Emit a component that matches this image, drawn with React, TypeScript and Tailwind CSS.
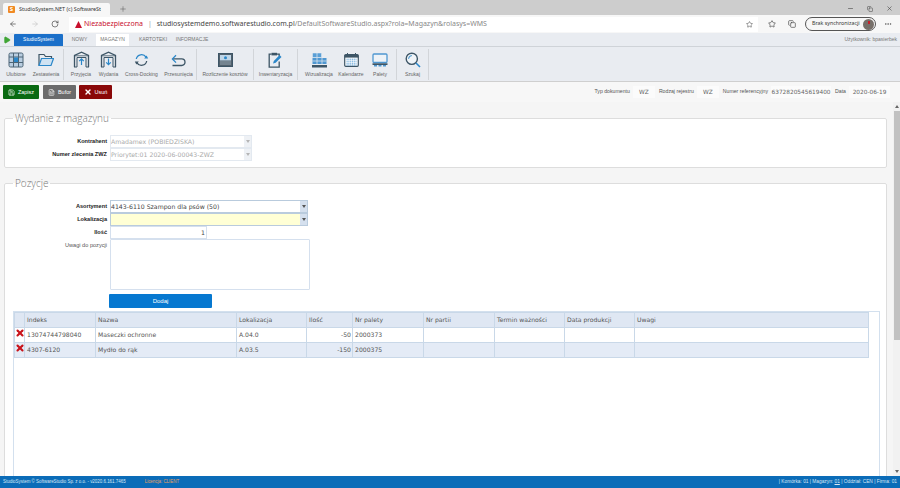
import { ArrowLeft, ArrowRight, RotateCw, Star, Plus, Minus, X, MoreHorizontal, Copy, Play, Save, FileText } from 'lucide-react';

const ui = { fontFamily: '"Noto Sans", sans-serif' };

function WarehouseIcon({ down }: { down?: boolean }) {
  return (
    <svg width="17" height="17" viewBox="0 0 17 17" fill="none">
      <path d="M1.5 16V4.5L8.5 1.2l7 3.3V16" stroke="#3d5566" strokeWidth="1.3" />
      <path d="M1 4.8h15" stroke="#3d5566" strokeWidth="0.8" />
      <path d="M4 16V6.5h9V16M1 16h3M13 16h3" stroke="#3d5566" strokeWidth="1" />
      {down ? (
        <path d="M8.5 7.5v6M6.2 11.3l2.3 2.4 2.3-2.4" stroke="#2b87c9" strokeWidth="1.2" />
      ) : (
        <path d="M8.5 14V8M6.2 10.2l2.3-2.4 2.3 2.4" stroke="#2b87c9" strokeWidth="1.2" />
      )}
    </svg>
  );
}

const icons: Record<string, React.ReactNode> = {
  ulubione: (
    <svg width="16" height="16" viewBox="0 0 16 16" fill="none">
      <rect x="1" y="1" width="14" height="14" rx="1.5" fill="#b9cde0" stroke="#4d6577" />
      <path d="M1 5h14M1 10.5h14M5.5 1v14M10.5 1v14" stroke="#4d6577" />
      <rect x="6" y="5.5" width="4" height="4.5" fill="#2b87c9" />
    </svg>
  ),
  zestawienia: (
    <svg width="16" height="14" viewBox="0 0 16 14" fill="none">
      <path d="M1 12.5V1.5h5l1.5 2h6v2" stroke="#3d5566" strokeWidth="1.2" />
      <path d="M1 12.5l2.5-7h12l-2.5 7z" fill="#cfe2f2" stroke="#2b87c9" strokeWidth="1.2" />
    </svg>
  ),
  cross: (
    <svg width="15" height="14" viewBox="0 0 15 14" fill="none">
      <path d="M2.3 6A5.3 5.3 0 0 1 12 4.2" stroke="#2b87c9" strokeWidth="1.3" />
      <path d="M12.7 8A5.3 5.3 0 0 1 3 9.8" stroke="#3d5566" strokeWidth="1.3" />
      <path d="M10.2 5.6h4L12.6 2.5z" fill="#2b87c9" />
      <path d="M0.8 8.4h4L2.4 11.5z" fill="#3d5566" />
    </svg>
  ),
  przesun: (
    <svg width="15" height="14" viewBox="0 0 15 14" fill="none">
      <path d="M1.5 12.5h9.2a3.3 3.3 0 0 0 0-6.6H1.8" stroke="#3d5566" strokeWidth="1.3" />
      <path d="M5 2.2L1.4 5.9 5 9.6" stroke="#2b87c9" strokeWidth="1.3" />
    </svg>
  ),
  rozliczenie: (
    <svg width="15" height="14" viewBox="0 0 15 14" fill="none">
      <rect x="0.5" y="0.5" width="14" height="13" fill="#51606c" stroke="#3d5566" />
      <rect x="2" y="2" width="11" height="5.5" fill="#bfd6e8" />
      <circle cx="7.5" cy="4.7" r="1.5" fill="#2b87c9" />
      <path d="M2 9h11M2 11h11" stroke="#a9bac7" strokeWidth="0.8" />
    </svg>
  ),
  inwentaryzacja: (
    <svg width="15" height="16" viewBox="0 0 15 16" fill="none">
      <path d="M3.5 2.2H1.2v13h10V9.5M9 2.2h2.2v2" stroke="#3d5566" strokeWidth="1.3" />
      <rect x="3.5" y="0.8" width="5.5" height="2.6" fill="#3d5566" />
      <path d="M5 11.5l.8-2.6 5.8-5.8 1.9 1.9-5.8 5.8z" fill="#2b87c9" />
    </svg>
  ),
  wizualizacja: (
    <svg width="15" height="16" viewBox="0 0 15 16" fill="none">
      <rect x="0.5" y="1" width="9" height="4.5" fill="#5a9fd6" stroke="#e9ecf1" strokeWidth="0.5" />
      <path d="M5 1v4.5" stroke="#e9ecf1" strokeWidth="0.7" />
      <rect x="0.5" y="6" width="14" height="6" fill="#4f97d1" />
      <path d="M5 6v6M10 6v6M0.5 9h14" stroke="#e9ecf1" strokeWidth="0.7" />
      <path d="M0 13h15v2.5H0z" fill="#3d5566" />
    </svg>
  ),
  kalendarze: (
    <svg width="15" height="14" viewBox="0 0 15 14" fill="none">
      <rect x="0.7" y="1.7" width="13.6" height="11.6" rx="1" fill="#fff" stroke="#3d5566" strokeWidth="1.2" />
      <path d="M0.7 2h13.6v2.6H0.7z" fill="#3d5566" />
      <path d="M3.5 0v3M11.5 0v3" stroke="#3d5566" />
      <path d="M2.5 6.2h10M2.5 8.2h10M2.5 10.2h10M2.5 12h10" stroke="#5a9fd6" strokeDasharray="1.2 .6" />
    </svg>
  ),
  palety: (
    <svg width="16" height="14" viewBox="0 0 16 14" fill="none">
      <rect x="1" y="1" width="14" height="8.5" rx="1" fill="#edf2f7" stroke="#4f97d1" strokeWidth="1.3" />
      <path d="M0.5 10.3h15v1.7H0.5z" fill="#3d5566" />
      <path d="M2 12h3v1.5H2zM6.5 12h3v1.5h-3zM11 12h3v1.5h-3z" fill="#4f97d1" />
    </svg>
  ),
  szukaj: (
    <svg width="16" height="16" viewBox="0 0 16 16" fill="none">
      <circle cx="6.8" cy="6.8" r="5.6" fill="#f0f4f8" stroke="#3d5566" strokeWidth="1.4" />
      <path d="M3.6 6.8a3.2 3.2 0 0 1 3.2-3.2" stroke="#2b87c9" />
      <path d="M11 11l4 4" stroke="#2b87c9" strokeWidth="1.6" />
    </svg>
  ),
};

const groups = [
  { width: 'w-[64px]', pad: 'pl-[1px]', items: [['Ulubione', 'ulubione', 'w-[30px]'], ['Zestawienia', 'zestawienia', 'w-[30px]']] },
  { width: 'w-[133px]', pad: 'pl-[3px]', items: [['Przyjęcia', 'przyjecia', 'w-[28px]'], ['Wydania', 'wydania', 'w-[27px]'], ['Cross-Docking', 'cross', 'w-[39px]'], ['Przesunięcia', 'przesun', 'w-[35px]']] },
  { width: 'w-[57px]', pad: 'justify-center', items: [['Rozliczenie kosztów', 'rozliczenie', 'w-[50px]']] },
  { width: 'w-[44px]', pad: 'justify-center', items: [['Inwentaryzacja', 'inwentaryzacja', 'w-[40px]']] },
  { width: 'w-[99px]', pad: 'pl-[5px]', items: [['Wizualizacja', 'wizualizacja', 'w-[32px]'], ['Kalendarze', 'kalendarze', 'w-[32px]'], ['Palety', 'palety', 'w-[26px]']] },
  { width: 'w-[32px]', pad: 'justify-center', items: [['Szukaj', 'szukaj', 'w-[28px]']] },
];

const docFields = [
  ['Typ dokumentu', 'WZ', 'w-[22px]'],
  ['Rodzaj rejestru', 'WZ', 'w-[22px]'],
  ['Numer referencyjny', '6372820545619400', 'w-[60px]'],
  ['Data', '2020-06-19', 'w-[41px]'],
];

const columns = ['Indeks', 'Nazwa', 'Lokalizacja', 'Ilość', 'Nr palety', 'Nr partii', 'Termin ważności', 'Data produkcji', 'Uwagi'];

const rows = [
  { id: '13074744798040', name: 'Maseczki ochronne', loc: 'A.04.0', qty: '-50', pallet: '2000373' },
  { id: '4307-6120', name: 'Mydło do rąk', loc: 'A.03.5', qty: '-150', pallet: '2000375' },
];

function Combo({ value, disabled, yellow, width }: { value: string; disabled?: boolean; yellow?: boolean; width: string }) {
  return (
    <div className={`flex h-[13px] ${width} items-stretch border ${disabled ? 'border-[#e3e9f0] bg-[#fbfbfb]' : 'border-[#b9cbdd]'} ${yellow ? 'bg-[#ffffd5]' : 'bg-white'}`}>
      <span className={`flex-1 truncate text-[6.2px] leading-[11px] ${disabled ? 'text-[#aaaaaa]' : 'text-[#444]'}`}>{value}</span>
      <span className={`flex w-[7px] items-center justify-center ${disabled ? 'bg-[#eef1f5]' : 'bg-[#d5e0ee]'}`}>
        <svg width="4" height="3" viewBox="0 0 4 3"><path d="M0 0h4L2 3z" fill={disabled ? '#b5b5b5' : '#555'} /></svg>
      </span>
    </div>
  );
}

function Field({ label, bold = true, children }: { label: string; bold?: boolean; children: React.ReactNode }) {
  return (
    <div className="flex items-start">
      <label className={`w-[107px] pr-0 text-right leading-[13px] text-[5.6px] ${bold ? 'font-bold text-[#222]' : 'text-[#555]'}`} style={{ fontFamily: '"Liberation Sans", sans-serif' }}>
        {label}
      </label>
      <div className="ml-[3px]">{children}</div>
    </div>
  );
}

export default function App() {
  return (
    <div className="flex h-[488px] w-[900px] flex-col overflow-hidden bg-white" style={{ fontFamily: '"DejaVu Sans", sans-serif' }}>
      {/* Browser tabs */}
      <div className="flex h-[15px] items-end bg-[#cdcdcd] pl-[3px]" style={ui}>
        <div className="flex h-[12px] w-[107px] items-center gap-[4px] rounded-t-[2px] bg-[#f7f7f7] pl-[5px]">
          <span className="flex h-[7px] w-[7px] items-center justify-center rounded-[1px] bg-[#f08a24] text-[6px] font-bold leading-none text-white">S</span>
          <span className="w-[82px] overflow-hidden whitespace-nowrap text-[5.4px] text-[#333]">StudioSystem.NET (c) SoftwareStudio</span>
        </div>
        <Plus className="mb-[2px] ml-[9px] h-[8px] w-[8px] text-[#555]" strokeWidth={1.5} />
        <div className="mb-[3px] ml-auto flex items-center gap-[13px] pr-[7px] text-[#444]">
          <Minus className="h-[7px] w-[7px]" />
          <Copy className="h-[6px] w-[6px]" />
          <X className="h-[7px] w-[7px]" />
        </div>
      </div>

      {/* Address bar */}
      <div className="flex h-[18px] items-center bg-[#f7f7f7]" style={ui}>
        <ArrowLeft className="ml-[9px] h-[8px] w-[8px] text-[#444]" />
        <ArrowRight className="ml-[14px] h-[8px] w-[8px] text-[#c4c4c4]" />
        <RotateCw className="ml-[12px] h-[8px] w-[8px] text-[#444]" />
        <div className="ml-[10px] flex h-[15px] w-[689px] items-center bg-white pl-[6px] text-[7px]">
          <svg width="7" height="7" viewBox="0 0 7 7"><path d="M3.5 0L7 7H0z" fill="#c8102e" /></svg>
          <span className="ml-[2px] text-[#c8102e]">Niezabezpieczona</span>
          <span className="ml-[5px] text-[#999]">|</span>
          <span className="ml-[5px] text-[#444]">studiosystemdemo.softwarestudio.com.pl</span>
          <span className="text-[#888]">/DefaultSoftwareStudio.aspx?rola=Magazyn&amp;rolasys=WMS</span>
          <Star className="ml-auto mr-[5px] h-[7px] w-[7px] text-[#555]" />
        </div>
        <Star className="ml-[10px] h-[8px] w-[8px] text-[#444]" />
        <Copy className="ml-[12px] h-[8px] w-[8px] text-[#444]" />
        <div className="ml-[9px] flex h-[14px] w-[71px] items-center justify-between rounded-full border border-[#555] pl-[6px] pr-[1px] text-[5.3px] text-[#333]">
          Brak synchronizacji
          <span className="flex h-[11px] w-[11px] items-start justify-center rounded-full bg-[#77706a] pt-[2px]">
            <span className="h-[3px] w-[2px] bg-[#c8202a]" />
          </span>
        </div>
        <MoreHorizontal className="ml-[8px] h-[8px] w-[8px] text-[#555]" />
      </div>

      {/* App menu */}
      <div className="flex h-[14px] items-end border-b border-[#cfd3d8] bg-[#e9ecf1] text-[5px] text-[#777]" style={{ fontFamily: '"Liberation Sans", sans-serif' }}>
        <Play className="mb-[2px] ml-[3px] h-[8px] w-[8px] fill-[#3fa535] text-[#3fa535]" />
        <div className="ml-[3px] flex h-[12px] w-[49px] items-center justify-center rounded-t-[1px] bg-[#1a6fc9] text-white">StudioSystem</div>
        <div className="flex h-[12px] w-[33px] items-center justify-center">NOWY</div>
        <div className="flex h-[12px] w-[33px] items-center justify-center bg-white">MAGAZYN</div>
        <div className="ml-[11px] flex h-[12px] w-[26px] items-center justify-center">KARTOTEKI</div>
        <div className="ml-[10px] flex h-[12px] w-[32px] items-center justify-center">INFORMACJE</div>
        <div className="ml-auto flex h-[12px] items-center pr-[3px] text-[#777]">Użytkownik: bpasierbek</div>
      </div>

      {/* Ribbon */}
      <div className="flex h-[35px] border-b border-[#cfcfcf] bg-[#e9ecf1] pt-[2px]" style={{ fontFamily: '"Liberation Sans", sans-serif' }}>
        {groups.map((g) => (
          <div key={g.width + g.items[0][0]} className={`flex h-[31px] ${g.width} ${g.pad} border-r border-[#d2d5d9]`}>
            {g.items.map(([label, icon, w]) => (
              <div key={label} className={`flex ${w} flex-col items-center`}>
                <div className="flex h-[21px] items-center justify-center">
                  {icon === 'przyjecia' ? <WarehouseIcon /> : icon === 'wydania' ? <WarehouseIcon down /> : icons[icon]}
                </div>
                <span className="mt-[1px] whitespace-nowrap text-[5px] leading-[7px] text-[#666]">{label}</span>
              </div>
            ))}
          </div>
        ))}
      </div>

      {/* Document toolbar */}
      <div className="flex h-[20px] items-center bg-[#f7f7f7] pl-[3px] text-[5.5px]" style={{ fontFamily: '"Liberation Sans", sans-serif' }}>
        <button className="flex h-[14px] w-[36px] items-center justify-center gap-[3px] rounded-[1px] bg-[#0a6a12] text-white">
          <Save className="h-[7px] w-[7px]" /> Zapisz
        </button>
        <button className="ml-[4px] flex h-[14px] w-[33px] items-center justify-center gap-[3px] rounded-[1px] bg-[#6b6b6b] text-white">
          <FileText className="h-[7px] w-[7px]" /> Bufor
        </button>
        <button className="ml-[3px] flex h-[14px] w-[33px] items-center justify-center gap-[3px] rounded-[1px] bg-[#8a0808] text-white">
          <X className="h-[8px] w-[8px]" strokeWidth={4} /> Usuń
        </button>
        <div className="ml-auto flex items-center pr-[10px] text-[5.2px] text-[#555]">
          {docFields.map(([label, value, w]) => (
            <div key={label} className="flex items-center">
              <span className="mr-[3px] ml-[4px] whitespace-nowrap">{label}</span>
              <span className={`flex h-[12px] ${w} items-center justify-center whitespace-nowrap bg-[#fbfbfb] text-[5.8px] text-[#666]`} style={{ fontFamily: '"DejaVu Sans", sans-serif' }}>{value}</span>
            </div>
          ))}
        </div>
      </div>

      {/* Content + page scrollbar */}
      <div className="flex min-h-0 flex-1">
        <div className="min-w-0 flex-1 overflow-hidden bg-[#f5f5f5] pl-[4px] pr-[6px]">
          <fieldset className="mt-[9px] h-[57px] rounded-[2px] border border-[#dddddd] bg-white">
            <legend className="ml-[8px] px-[2px] text-[10px] font-light leading-[14px] text-[#777]" style={{ fontFamily: '"Open Sans", sans-serif' }}>Wydanie z magazynu</legend>
            <div className="-ml-[5px] mt-[10px] flex flex-col">
              <Field label="Kontrahent">
                <Combo value="Amadamex (POBIEDZISKA)" disabled width="w-[142px]" />
              </Field>
              <Field label="Numer zlecenia ZWZ">
                <Combo value="Priorytet:01 2020-06-00043-ZWZ" disabled width="w-[142px]" />
              </Field>
            </div>
          </fieldset>

          <fieldset className="mt-[8px] h-[320px] rounded-[2px] border border-[#dddddd] bg-white">
            <legend className="ml-[8px] px-[2px] text-[10px] font-light leading-[14px] text-[#777]" style={{ fontFamily: '"Open Sans", sans-serif' }}>Pozycje</legend>
            <div className="-ml-[5px] mt-[10px] flex flex-col">
              <Field label="Asortyment">
                <Combo value="4143-6110 Szampon dla psów (50)" width="w-[198px]" />
              </Field>
              <Field label="Lokalizacja">
                <Combo value="" yellow width="w-[198px]" />
              </Field>
              <Field label="Ilość">
                <div className="h-[13px] w-[97px] border border-[#d5e0ee] bg-white pr-[1px] text-right text-[6.2px] leading-[11px] text-[#444]">1</div>
              </Field>
              <Field label="Uwagi do pozycji" bold={false}>
                <div className="h-[51px] w-[200px] rounded-[1px] border border-[#d5e0ee] bg-white" />
              </Field>
              <button className="ml-[109px] mt-[4px] h-[14px] w-[103px] rounded-[1px] bg-[#0678d0] text-[6px] text-white" style={{ fontFamily: '"Liberation Sans", sans-serif' }}>Dodaj</button>
            </div>

            {/* Positions grid */}
            <div className="ml-[8px] mt-[3px] h-[170px] w-[867px] border border-[#d3e0ee] pr-[10px]">
              <table className="w-[855px] table-fixed border-collapse text-[6.1px] text-[#555]">
                <colgroup>
                  <col className="w-[10px]" />
                  <col className="w-[71px]" />
                  <col className="w-[141px]" />
                  <col className="w-[70px]" />
                  <col className="w-[46px]" />
                  <col className="w-[71px]" />
                  <col className="w-[71px]" />
                  <col className="w-[70px]" />
                  <col className="w-[70px]" />
                  <col />
                </colgroup>
                <thead>
                  <tr className="h-[15px] bg-[#dfe7f3]">
                    <th className="border border-[#c9d8e8]" />
                    {columns.map((c) => (
                      <th key={c} className="border border-[#c9d8e8] pl-[2px] text-left font-normal">{c}</th>
                    ))}
                  </tr>
                </thead>
                <tbody>
                  {rows.map((r, i) => (
                    <tr key={r.id} className={`h-[15px] ${i % 2 ? 'bg-[#e4ebf6]' : 'bg-white'}`}>
                      <td className="border border-[#c9d8e8] p-0 align-top">
                        <X className="h-[10px] w-[10px] text-[#c8141c]" strokeWidth={5} />
                      </td>
                      <td className="border border-[#c9d8e8] pl-[2px]">{r.id}</td>
                      <td className="border border-[#c9d8e8] pl-[2px]">{r.name}</td>
                      <td className="border border-[#c9d8e8] pl-[2px]">{r.loc}</td>
                      <td className="border border-[#c9d8e8] pr-[1px] text-right">{r.qty}</td>
                      <td className="border border-[#c9d8e8] pl-[2px]">{r.pallet}</td>
                      <td className="border border-[#c9d8e8]" />
                      <td className="border border-[#c9d8e8]" />
                      <td className="border border-[#c9d8e8]" />
                      <td className="border border-[#c9d8e8]" />
                    </tr>
                  ))}
                </tbody>
              </table>
            </div>
          </fieldset>
        </div>

        <div className="flex w-[7px] flex-col items-center bg-[#f1f1f1] pt-[3px]">
          <svg width="4" height="3" viewBox="0 0 4 3"><path d="M0 3h4L2 0z" fill="#666" /></svg>
          <div className="mt-[3px] h-[229px] w-[6px] bg-[#c1c1c1]" />
          <svg className="mt-auto mb-[3px]" width="4" height="3" viewBox="0 0 4 3"><path d="M0 0h4L2 3z" fill="#666" /></svg>
        </div>
      </div>

      {/* Status bar */}
      <div className="flex h-[12px] items-center justify-between bg-[#0b6cb8] px-[3px] text-[4.8px] text-[#d8e8f5]" style={{ fontFamily: '"Liberation Sans", sans-serif' }}>
        <div className="text-[4.45px]">
          StudioSystem © SoftwareStudio Sp. z o.o. - v2020.6.161.7465
          <span className="ml-[19px] text-[#e8a060]">Licencja: CLIENT</span>
        </div>
        <div>| Komórka: 01 | Magazyn: <span className="underline">01</span> | Oddział: CEN | Firma: 01</div>
      </div>
    </div>
  );
}
